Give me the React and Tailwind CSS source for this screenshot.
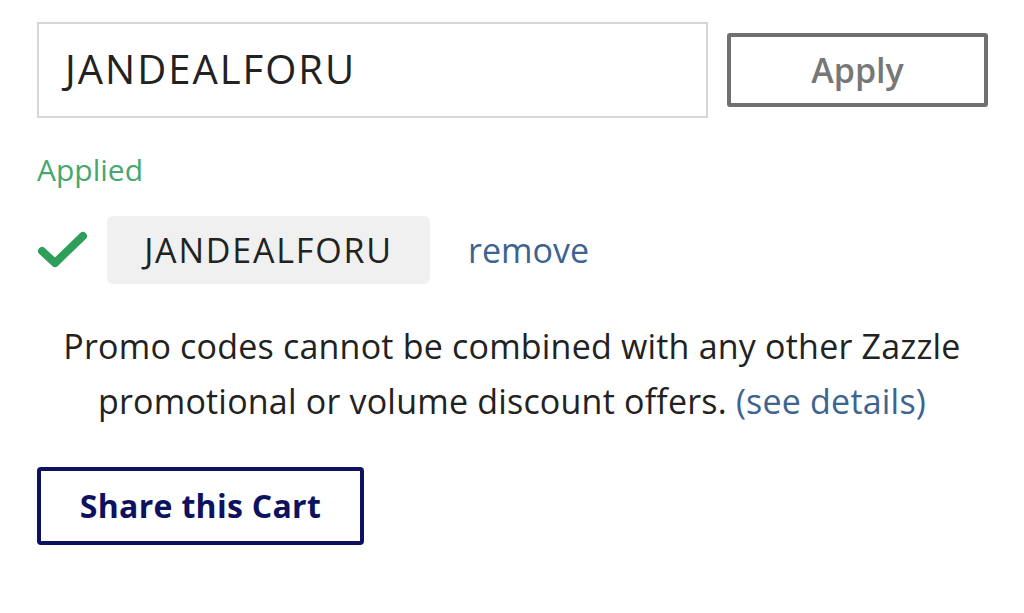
import React from "react";

export default function App() {
  return (
    <div className="w-[1024px] h-[613px] bg-white overflow-hidden" style={{ fontFamily: "'Open Sans', Lato, sans-serif" }}>
      <div className="pl-[37px] pr-[36px] pt-[22px]">
        <div className="flex items-center">
          <div className="w-[671px] h-[96px] border-2 border-[#d6d6d6] flex items-center pl-[26px]">
            <span className="text-[40px] leading-none text-[#222] tracking-[2px] -mt-[3px]">JANDEALFORU</span>
          </div>
          <button className="ml-[19px] w-[261px] h-[74px] border-[4px] border-[#707070] rounded-[3px] flex items-center justify-center text-[34px] leading-none font-semibold text-[#777]">
            Apply
          </button>
        </div>
        <div className="mt-[37px] text-[30px] text-[#46a86f] leading-none">Applied</div>
        <div className="mt-[31px] flex items-center">
          <svg width="52" height="40" viewBox="0 0 52 40" className="shrink-0">
            <path d="M5 21 L18 33 L46 6" fill="none" stroke="#2e9e5b" strokeWidth="8" strokeLinecap="round" strokeLinejoin="round" />
          </svg>
          <div className="ml-[18px] w-[323px] h-[68px] bg-[#f0f0f0] rounded-[6px] flex items-center justify-center text-[34px] leading-none text-[#222] tracking-[1.8px]">
            JANDEALFORU
          </div>
          <span className="ml-[38px] text-[34px] leading-none text-[#3d6491]">remove</span>
        </div>
      </div>
      <p className="mt-[35px] text-center text-[34px] leading-[55px] text-[#222] tracking-[0.2px]">
        Promo codes cannot be combined with any other Zazzle
        <br />
        promotional or volume discount offers. <span className="text-[#3d6491]">(see details)</span>
      </p>
      <div className="pl-[37px] mt-[38px]">
        <button className="w-[327px] h-[78px] border-[4px] border-[#0d1160] rounded-[4px] flex items-center justify-center text-[32px] leading-none font-bold text-[#0d1160] tracking-[0.3px]">
          Share this Cart
        </button>
      </div>
    </div>
  );
}
